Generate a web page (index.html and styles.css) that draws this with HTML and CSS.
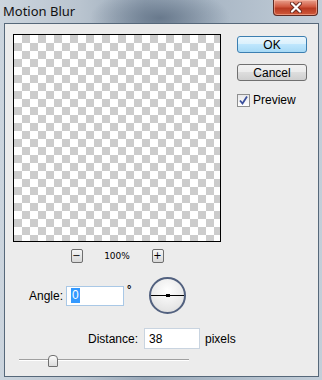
FILE: index.html
```html
<!DOCTYPE html>
<html lang="en">
<head>
  <meta charset="UTF-8" />
  <title>Motion Blur</title>
  <link rel="stylesheet" href="styles.css">
</head>
<body>

<div class="window">
  <div class="titlebar">
    <span class="title">Motion Blur</span>
    <div class="close-btn">
      <svg width="12" height="11" viewBox="0 0 12 11">
        <path d="M2 1.5 L10 9.5 M10 1.5 L2 9.5" stroke="#6b2a20" stroke-width="4" stroke-linecap="round"/>
        <path d="M2 1.5 L10 9.5 M10 1.5 L2 9.5" stroke="#ffffff" stroke-width="2.2" stroke-linecap="round"/>
      </svg>
    </div>
  </div>

  <div class="panel">
    <div class="top">
      <div class="preview-col">
        <div class="preview-box"></div>
        <div class="zoom-row">
          <button class="zoom-btn">−</button>
          <span class="zoom-val">100%</span>
          <button class="zoom-btn">+</button>
        </div>
      </div>

      <div class="side-col">
        <button class="btn btn-ok">OK</button>
        <button class="btn">Cancel</button>
        <label class="check">
          <span class="check-box">
            <svg width="11" height="11" viewBox="0 0 11 11">
              <path d="M2 5.5 L4.5 8.5 L9 1.5" fill="none" stroke="#3a4f9c" stroke-width="1.8"/>
            </svg>
          </span>
          Preview
        </label>
      </div>
    </div>

    <div class="angle-row">
      <span class="label">Angle:</span>
      <div class="field field-focus"><span class="sel">0</span></div>
      <span class="degree">°</span>
      <div class="dial">
        <div class="dial-line"></div>
        <div class="dial-dot"></div>
      </div>
    </div>

    <div class="distance-row">
      <span class="label">Distance:</span>
      <div class="field">38</div>
      <span class="unit">pixels</span>
    </div>

    <div class="slider">
      <div class="track"></div>
      <div class="thumb"></div>
    </div>
  </div>
</div>

</body>
</html>
```

FILE: styles.css
```css
body {
  margin: 0;
  padding: 0;
  font-family: 'Liberation Sans', Arial, sans-serif;
  font-size: 12px;
  color: #000;
}

.window {
  width: 322px;
  height: 380px;
  box-sizing: border-box;
  padding: 0 3px 3px 4px;
  background:
    radial-gradient(ellipse 70px 30px at 160px 18px, rgba(95, 112, 132, 0.85), rgba(95, 112, 132, 0)),
    linear-gradient(90deg, #ccd5de 0%, #b9c4cf 25%, #9aa9b9 45%, #a9b7c5 65%, #c3ced9 100%);
  display: flex;
  flex-direction: column;
}

.titlebar {
  height: 23px;
  display: flex;
  justify-content: space-between;
  align-items: flex-start;
  margin-left: -4px;
  margin-right: -3px;
}

.title {
  font-family: 'Noto Sans', sans-serif;
  font-size: 13px;
  color: #111;
  padding: 2px 0 0 3px;
}

.close-btn {
  width: 43px;
  height: 15px;
  margin-right: 4px;
  border: 1px solid #5e2b24;
  border-top: none;
  border-radius: 0 0 4px 4px;
  background: linear-gradient(#e9a08e, #d0583f 45%, #b83a22 55%, #d05a3c);
  display: flex;
  justify-content: center;
  align-items: center;
  box-shadow: inset 0 0 0 1px rgba(255, 200, 180, 0.5);
}

.panel {
  flex: 1;
  background: #ececec;
  border: 1px solid #56687a;
  display: flex;
  flex-direction: column;
}

.top {
  display: flex;
  gap: 16px;
  padding: 10px 0 0 8px;
}

.preview-col {
  display: flex;
  flex-direction: column;
  align-items: center;
}

.preview-box {
  width: 206px;
  height: 206px;
  border: 1px solid #000;
  background-color: #fff;
  background-image: conic-gradient(#cccccc 25%, #ffffff 0 50%, #cccccc 0 75%, #ffffff 0);
  background-size: 16px 16px;
}

.zoom-row {
  display: flex;
  align-items: center;
  margin-top: 7px;
  height: 14px;
}

.zoom-btn {
  width: 12px;
  height: 14px;
  padding: 0;
  font-family: 'DejaVu Sans', sans-serif;
  font-size: 10px;
  line-height: 12px;
  border: 1px solid #6e6e6e;
  border-radius: 2px;
  background: linear-gradient(#f6f6f6, #d8d8d8);
  color: #000;
}

.zoom-val {
  width: 69px;
  text-align: center;
  font-family: 'DejaVu Sans', sans-serif;
  font-size: 9px;
}

.side-col {
  display: flex;
  flex-direction: column;
  padding-top: 2px;
}

.btn {
  width: 70px;
  height: 17px;
  padding: 0;
  margin-bottom: 11px;
  font-family: 'Liberation Sans', Arial, sans-serif;
  font-size: 12px;
  line-height: 14px;
  color: #000;
  border: 1px solid #707070;
  border-radius: 3px;
  background: linear-gradient(#f2f2f2 0%, #ebebeb 50%, #dddddd 50%, #cfcfcf 100%);
}

.btn-ok {
  border-color: #3c7fb1;
  background: linear-gradient(#eaf6fd 0%, #d9f0fc 50%, #bee6fd 50%, #a7d9f5 100%);
}

.check {
  display: flex;
  align-items: center;
  gap: 3px;
  margin-top: 1px;
}

.check-box {
  width: 11px;
  height: 11px;
  border: 1px solid #8e8f8f;
  background: linear-gradient(#e8e8ea, #ffffff);
  display: flex;
}

.angle-row {
  display: flex;
  align-items: center;
  padding-left: 24px;
  margin-top: 14px;
  height: 37px;
}

.label {
  margin-right: 3px;
}

.field {
  width: 52px;
  height: 18px;
  border: 1px solid #abadb3;
  background: #fff;
  padding-left: 4px;
  display: flex;
  align-items: center;
}

.field-focus {
  border-color: #a9c8e6;
}

.sel {
  background: #3399ff;
  color: #fff;
  padding: 0 1px;
  line-height: 15px;
}

.degree {
  align-self: flex-start;
  margin: 6px 0 0 3px;
  font-size: 11px;
  font-weight: bold;
}

.dial {
  position: relative;
  width: 33px;
  height: 33px;
  margin-left: 18px;
  border: 2px solid #52617f;
  border-radius: 50%;
  background: radial-gradient(circle at 50% 35%, #ffffff, #e6e6e6 70%, #d4d4d4);
}

.dial-line {
  position: absolute;
  left: 0;
  right: 0;
  top: 16px;
  height: 1px;
  background: #000;
}

.dial-dot {
  position: absolute;
  left: 15px;
  top: 15px;
  width: 4px;
  height: 3px;
  background: #000;
}

.distance-row {
  display: flex;
  align-items: center;
  padding-left: 83px;
  margin-top: 14px;
}

.distance-row .label {
  margin-right: 6px;
}

.distance-row .field {
  width: 50px;
  height: 19px;
  border-color: #c9d4e0;
}

.unit {
  margin-left: 5px;
}

.slider {
  position: relative;
  width: 170px;
  height: 12px;
  margin: 6px 0 0 14px;
}

.track {
  position: absolute;
  left: 0;
  right: 0;
  top: 4px;
  height: 1px;
  background: #a0a0a0;
  border-bottom: 1px solid #fff;
}

.thumb {
  position: absolute;
  left: 29px;
  top: 0;
  width: 8px;
  height: 10px;
  border: 1px solid #707070;
  border-radius: 4px 4px 1px 1px;
  background: linear-gradient(#fbfbfb, #dcdcdc);
}
```
